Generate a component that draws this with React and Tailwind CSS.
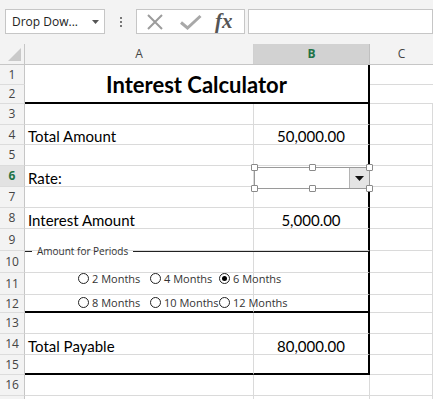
import React from 'react'

const rows = [
  { n: 3, h: 'h-[21px]' },
  { n: 4, h: 'h-[20px]', a: 'Total Amount', b: '50,000.00' },
  { n: 5, h: 'h-[21px]' },
  { n: 6, h: 'h-[21px]', a: 'Rate:', active: true },
  { n: 7, h: 'h-[21px]' },
  { n: 8, h: 'h-[21px]', a: 'Interest Amount', b: '5,000.00' },
  { n: 9, h: 'h-[22px]' },
  { n: 10, h: 'h-[22px]' },
  { n: 11, h: 'h-[22px]' },
  { n: 12, h: 'h-[18px]', thick: true },
  { n: 13, h: 'h-[21px]' },
  { n: 14, h: 'h-[21px]', a: 'Total Payable', b: '80,000.00' },
  { n: 15, h: 'h-[20px]', thick: true },
  { n: 16, h: 'h-[21px]', outside: true },
  { n: '', h: 'h-[21px]', outside: true },
]

const periods = [
  ['2 Months', false],
  ['4 Months', false],
  ['6 Months', true],
  ['8 Months', false],
  ['10 Months', false],
  ['12 Months', false],
]

function RowHead({ n, h, active }) {
  return (
    <div
      className={[
        'w-[25px] shrink-0 flex items-center justify-center border-r border-b border-r-[#c6c6c6] border-b-[#dcdcdc] text-[12px] font-["Open_Sans",sans-serif]',
        h,
        active ? 'bg-[#e2e2e2] text-[#217346] font-bold' : 'bg-[#f3f3f3] text-[#444]',
      ].join(' ')}
    >
      {n}
    </div>
  )
}

function Row({ r }) {
  const bottom = r.thick ? 'border-b-2 border-b-black' : 'border-b border-b-[#dadada]'
  return (
    <div className={['flex', r.h].join(' ')}>
      <RowHead n={r.n} h={r.h} active={r.active} />
      <div className={['w-[229px] shrink-0 flex items-end pl-[3px] border-r border-r-[#dadada] text-[15px] leading-[16px] text-black', bottom].join(' ')}>
        {r.a}
      </div>
      <div
        className={[
          'w-[116px] shrink-0 flex items-end justify-center text-[15px] leading-[16px] text-black',
          r.outside ? 'border-r border-r-[#dadada] border-b border-b-[#dadada]' : 'border-r-2 border-r-black ' + bottom,
        ].join(' ')}
      >
        {r.b}
      </div>
      <div className="flex-1 border-r border-b border-[#dadada]" />
    </div>
  )
}

function Radio({ label, on }) {
  return (
    <div className="h-[11px] flex items-center gap-[3px]">
      <span className="w-[11px] h-[11px] shrink-0 rounded-full border border-[#222] bg-white flex items-center justify-center">
        {on ? <span className="w-[5px] h-[5px] rounded-full bg-black" /> : null}
      </span>
      <span className="text-[11px] leading-none text-[#333] whitespace-nowrap">{label}</span>
    </div>
  )
}

function Handle({ pos }) {
  return <span className={['absolute w-[7px] h-[7px] bg-white border border-[#8a8a8a] rounded-[1px]', pos].join(' ')} />
}

export default function App() {
  return (
    <div className="w-[433px] h-[399px] overflow-hidden bg-white font-['Lato',sans-serif] select-none">
      {/* toolbar */}
      <div className="h-[44px] bg-[#f3f3f3] flex items-start pt-[9px] pl-[5px] font-['Open_Sans',sans-serif]">
        <div className="w-[100px] h-[25px] bg-white border border-[#c6c6c6] flex items-center justify-between pl-[6px] pr-[5px]">
          <span className="text-[12px] text-[#222]">Drop Dow...</span>
          <svg width="7" height="4" viewBox="0 0 7 4"><path d="M0 0h7L3.5 4z" fill="#555" /></svg>
        </div>
        <div className="w-[31px] h-[25px] flex flex-col items-center justify-center gap-[2px]">
          <span className="w-[2px] h-[2px] bg-[#777]" />
          <span className="w-[2px] h-[2px] bg-[#777]" />
          <span className="w-[2px] h-[2px] bg-[#777]" />
        </div>
        <div className="w-[109px] h-[25px] bg-white border border-[#c6c6c6] flex items-center pl-[9px]">
          <svg width="18" height="18" viewBox="0 0 18 18">
            <path d="M2 2L16 16M16 2L2 16" stroke="#9c9c9c" strokeWidth="2" />
          </svg>
          <svg width="22" height="16" viewBox="0 0 22 16" className="ml-[16px]">
            <path d="M1 8.5L7.5 14L20.5 2" stroke="#a8a8a8" strokeWidth="3" fill="none" />
          </svg>
          <span className="ml-[13px] font-['Liberation_Serif',serif] italic font-bold text-[21px] leading-none text-[#555]">fx</span>
        </div>
        <div className="ml-[3px] flex-1 h-[25px] bg-white border border-[#c6c6c6]" />
      </div>

      {/* column headers */}
      <div className="flex h-[21px] bg-[#f3f3f3] text-[12px] text-[#444] font-['Open_Sans',sans-serif] border-b border-[#c6c6c6]">
        <div className="w-[25px] shrink-0 border-r border-[#c6c6c6] flex items-end justify-end pr-[3px] pb-[3px]">
          <svg width="13" height="13" viewBox="0 0 13 13"><path d="M13 0V13H0z" fill="#c9c9c9" /></svg>
        </div>
        <div className="w-[229px] shrink-0 border-r border-[#d0d0d0] flex items-center justify-center">A</div>
        <div className="w-[116px] shrink-0 border-r border-[#c0c0c0] bg-[#d2d2d2] flex items-center justify-center text-[#217346] font-bold">B</div>
        <div className="flex-1 flex items-center justify-center">C</div>
      </div>

      {/* sheet body */}
      <div className="relative">
        <div className="flex h-[39px]">
          <div className="flex flex-col">
            <RowHead n={1} h="h-[20px]" />
            <RowHead n={2} h="h-[19px]" />
          </div>
          <div className="w-[345px] shrink-0 border-r-2 border-b-2 border-black flex items-center justify-center pt-[2px] text-[22px] leading-none font-bold text-black">
            Interest Calculator
          </div>
          <div className="flex-1 flex flex-col">
            <div className="h-[20px] border-b border-[#dadada]" />
            <div className="h-[19px] border-b border-[#dadada]" />
          </div>
        </div>
        {rows.map((r, i) => (
          <Row key={i} r={r} />
        ))}

        {/* combo box control over B6 */}
        <div className="absolute left-[254px] top-[102px] w-[116px] h-[22px] bg-white border border-[#9a9a9a] flex justify-end">
          <div className="w-[20px] h-full bg-[#e4e4e4] border-l border-[#b4b4b4] flex items-center justify-center">
            <svg width="9" height="5" viewBox="0 0 9 5"><path d="M0 0h9L4.5 5z" fill="#111" /></svg>
          </div>
          <Handle pos="-left-[4px] -top-[4px]" />
          <Handle pos="left-[54px] -top-[4px]" />
          <Handle pos="-right-[4px] -top-[4px]" />
          <Handle pos="-left-[4px] -bottom-[4px]" />
          <Handle pos="left-[54px] -bottom-[4px]" />
          <Handle pos="-right-[4px] -bottom-[4px]" />
        </div>

        {/* group box control over A10:B12 */}
        <div className="absolute left-[25px] top-[179px] w-[344px] font-['Open_Sans',sans-serif]">
          <div className="h-[14px] flex items-center">
            <span className="w-[7px] border-t border-[#222]" />
            <span className="px-[5px] text-[10px] leading-none text-[#333]">Amount for Periods</span>
            <span className="flex-1 border-t border-[#222]" />
          </div>
          <div className="mt-[15px] pl-[53px] grid grid-cols-[72px_69px_auto] gap-y-[13px]">
            {periods.map(([label, on]) => (
              <Radio key={label} label={label} on={on} />
            ))}
          </div>
        </div>
      </div>
    </div>
  )
}
